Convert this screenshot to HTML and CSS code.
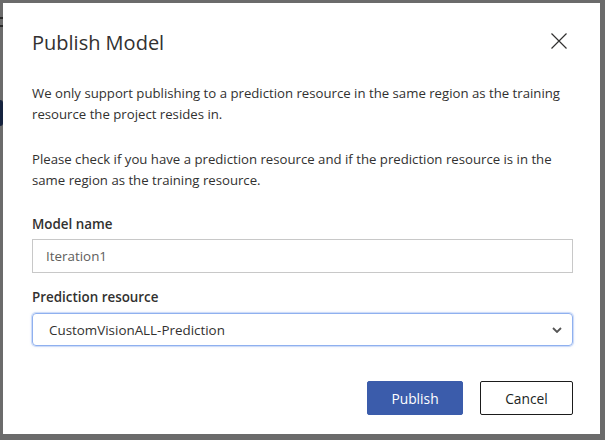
FILE: index.html
```html
<!DOCTYPE html>
<html>
<head>
<meta charset="utf-8">
<link rel="stylesheet" href="styles.css">
</head>
<body>
<div class="page">
  <div class="page-side">
    <span class="dash"></span>
    <span class="dash"></span>
    <span class="blob"></span>
  </div>
  <div class="page-table">
    <span class="col col-ap">A.P.</span>
    <span class="col col-count">Image count</span>
  </div>
</div>

<div class="dialog" role="dialog">
  <div class="dialog-head">
    <h1 class="title">Publish Model</h1>
    <button class="close" aria-label="Close">
      <svg width="16" height="16" viewBox="0 0 16 16"><path d="M0.5 0.5 L15.5 15.5 M15.5 0.5 L0.5 15.5" stroke="#323130" stroke-width="1.2" fill="none"/></svg>
    </button>
  </div>
  <p class="text">We only support publishing to a prediction resource in the same region as the training resource the project resides in.</p>
  <p class="text">Please check if you have a prediction resource and if the prediction resource is in the same region as the training resource.</p>
  <label class="label">Model name</label>
  <div class="input">Iteration1</div>
  <label class="label label-2">Prediction resource</label>
  <div class="select">
    <span>CustomVisionALL-Prediction</span>
    <svg class="chev" width="10" height="6" viewBox="0 0 10 6"><path d="M1 1 L5 5 L9 1" stroke="#555" stroke-width="1.8" fill="none"/></svg>
  </div>
  <div class="actions">
    <button class="btn btn-primary">Publish</button>
    <button class="btn btn-default">Cancel</button>
  </div>
</div>
</body>
</html>
```

FILE: styles.css
```css
* { box-sizing: border-box; }
html, body { margin: 0; padding: 0; }
body {
  width: 605px;
  height: 440px;
  overflow: hidden;
  background: #6b6b6b;
  font-family: "Open Sans", "Noto Sans", sans-serif;
  position: relative;
}
.page { position: relative; height: 440px; }
.page-side {
  display: flex;
  flex-direction: column;
  width: 3px;
  padding-top: 17px;
}
.dash { display: block; height: 2px; background: #2a2a2a; margin-bottom: 6px; }
.blob { display: block; height: 26px; margin-top: 67px; background: #16233f; border-radius: 0 4px 4px 0; }
.page-table {
  display: flex;
  padding-top: 312px;
  padding-left: 27px;
  font-size: 14px;
  font-weight: 700;
  color: #1c1c1c;
}
.col-count { margin-left: 100px; }

.dialog {
  position: absolute;
  left: 3px;
  top: 3px;
  width: 597px;
  height: 431px;
  background: #fff;
  padding: 26px 28px 0 29px;
  color: #323130;
  display: flex;
  flex-direction: column;
}
.dialog-head {
  display: flex;
  justify-content: space-between;
  align-items: flex-start;
}
.title {
  margin: 0;
  font-size: 20px;
  font-weight: 400;
  line-height: 28px;
  color: #323130;
}
.close {
  border: 0;
  background: none;
  padding: 0;
  margin-top: 4px;
  margin-right: 5px;
  width: 16px;
  height: 16px;
}
.close svg { display: block; }
.text {
  margin: 0;
  margin-top: 26px;
  font-size: 13.2px;
  line-height: 20.5px;
}
.text + .text { margin-top: 25px; }
.label {
  display: block;
  margin-top: 24px;
  font-size: 13.4px;
  font-weight: 600;
  line-height: 20px;
}
.label-2 { margin-top: 14px; }
.input {
  margin-top: 5px;
  width: 541px;
  height: 34px;
  border: 1px solid #c8c8c8;
  padding: 0 13px;
  display: flex;
  align-items: center;
  font-size: 13.4px;
  color: #605e5c;
}
.select {
  margin-top: 6px;
  width: 541px;
  height: 33px;
  border: 1px solid #8fb0ef;
  border-radius: 4px;
  box-shadow: 0 0 0 1px rgba(120,160,235,0.25), 0 0 3px rgba(90,140,230,0.35);
  padding: 0 10px 0 16px;
  display: flex;
  align-items: center;
  justify-content: space-between;
  font-size: 13.4px;
  color: #323130;
}
.chev { display: block; }
.actions {
  display: flex;
  justify-content: flex-end;
  gap: 17px;
  margin-top: 35px;
  width: 541px;
}
.btn {
  height: 34px;
  font-family: inherit;
  font-size: 13.8px;
  border-radius: 2px;
  padding: 0;
}
.btn-primary {
  width: 96px;
  background: #3b5cab;
  border: 1px solid #3b5cab;
  color: #fff;
}
.btn-default {
  width: 93px;
  background: #fff;
  border: 1px solid #1b1b1b;
  color: #201f1e;
}
```
